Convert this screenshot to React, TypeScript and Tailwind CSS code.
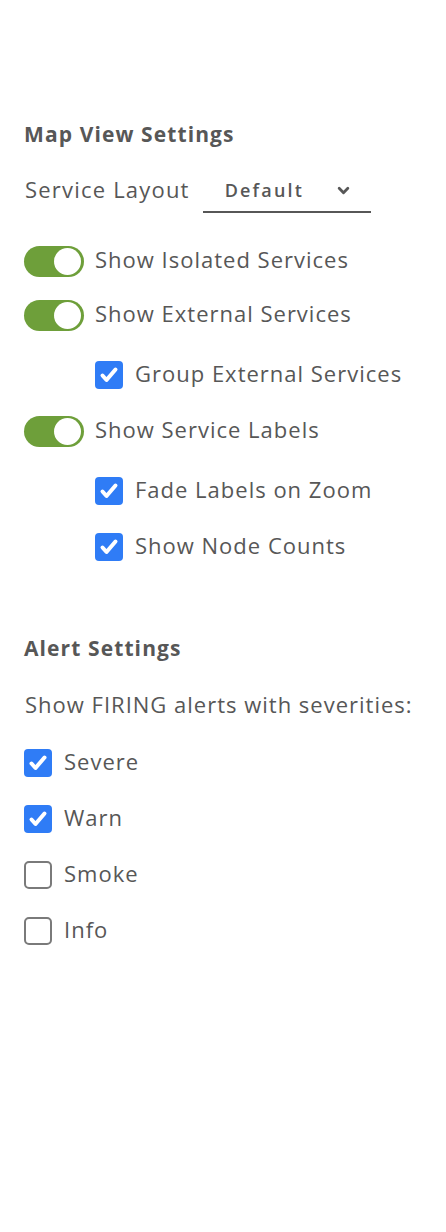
import React from 'react';

const font = { fontFamily: '"Open Sans", "Liberation Sans", sans-serif' };

const Toggle = ({ label }: { label: string }) => (
  <div className="flex items-center h-[31px]">
    <div className="relative w-[60px] h-[31px] rounded-full bg-[#6e9f3a] shrink-0">
      <div className="absolute right-[3px] top-[2px] w-[27px] h-[27px] rounded-full bg-white" />
    </div>
    <span className="ml-[11px] pb-[4px] text-[22px] text-[#575757] tracking-[1px]">{label}</span>
  </div>
);

const Check = ({ label, checked }: { label: string; checked?: boolean }) => (
  <div className="flex items-center h-[28px]">
    {checked ? (
      <div className="w-[28px] h-[28px] rounded-[4px] bg-[#2f7cf6] flex items-center justify-center shrink-0">
        <svg viewBox="0 0 24 24" className="w-[24px] h-[24px]" fill="none" stroke="white" strokeWidth="4" strokeLinecap="round" strokeLinejoin="round">
          <path d="M5.5 12.5l4 4.5L18.5 6.5" />
        </svg>
      </div>
    ) : (
      <div className="w-[28px] h-[28px] rounded-[5px] border-2 border-[#7a7a7a] bg-white shrink-0" />
    )}
    <span className="ml-[12px] pb-[4px] text-[22px] text-[#575757] tracking-[1px]">{label}</span>
  </div>
);

export default function App() {
  return (
    <div className="w-[446px] h-[1232px] bg-white pl-[24px]" style={font}>
      <h2 className="pt-[119px] text-[21px] font-bold text-[#575757] leading-[30px] tracking-[1.1px]">Map View Settings</h2>

      <div className="mt-[20px] flex items-center h-[44px]">
        <span className="pl-[1px] pb-[4px] text-[22px] text-[#575757] tracking-[1.2px]">Service Layout</span>
        <div className="ml-[13px] w-[168px] h-[44px] border-b-2 border-[#575757] flex items-center">
          <span className="ml-[22px] text-[18px] font-semibold tracking-[2.2px] text-[#575757]">Default</span>
          <svg viewBox="0 0 12 8" className="ml-[33px] w-[13px] h-[9px]" fill="none" stroke="#575757" strokeWidth="2.6" strokeLinecap="round" strokeLinejoin="round">
            <path d="M2 2l4 4 4-4" />
          </svg>
        </div>
      </div>

      <div className="mt-[33px] flex flex-col">
        <Toggle label="Show Isolated Services" />
        <div className="mt-[23px]"><Toggle label="Show External Services" /></div>
        <div className="mt-[30px] pl-[71px]"><Check label="Group External Services" checked /></div>
        <div className="mt-[27px]"><Toggle label="Show Service Labels" /></div>
        <div className="mt-[30px] pl-[71px]"><Check label="Fade Labels on Zoom" checked /></div>
        <div className="mt-[28px] pl-[71px]"><Check label="Show Node Counts" checked /></div>
      </div>

      <h2 className="mt-[72px] text-[21px] font-bold text-[#575757] leading-[30px] tracking-[1.1px]">Alert Settings</h2>
      <p className="mt-[26px] pl-[1px] text-[22px] text-[#575757] leading-[30px] tracking-[1px]">Show FIRING alerts with severities:</p>

      <div className="mt-[30px] flex flex-col gap-[28px]">
        <Check label="Severe" checked />
        <Check label="Warn" checked />
        <Check label="Smoke" />
        <Check label="Info" />
      </div>
    </div>
  );
}
